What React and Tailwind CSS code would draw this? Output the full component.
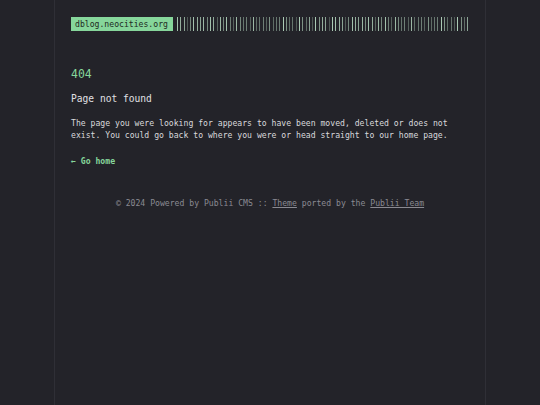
const bars = Array.from({ length: 89 }, (_, i) => {
  const pattern = [0.85, 0.45, 0.7, 0.35, 0.9, 0.55, 0.4, 0.75, 0.5, 0.3, 0.8, 0.6];
  return pattern[(i * 7 + (i >> 2)) % pattern.length];
});

export default function App() {
  return (
    <div
      className="min-h-[405px] w-full bg-[#232329] text-[#e4e4e7]"
      style={{ fontFamily: '"DejaVu Sans Mono", "Liberation Mono", monospace' }}
    >
      <div className="mx-auto min-h-[405px] w-[432px] border-x border-[#2f2f36] px-[16px]">
        {/* header */}
        <header className="flex items-stretch pt-[17px]">
          <a className="flex h-[14px] w-[102px] items-center bg-[#86d69b] px-[4px] text-[8.15px] text-[#1f2a22]">
            dblog.neocities.org
          </a>
          <div className="ml-[4px] flex flex-1 justify-between">
            {bars.map((o, i) => (
              <span
                key={i}
                className="h-[14px] w-px bg-[#b9dcc3]"
                style={{ opacity: o }}
              />
            ))}
          </div>
        </header>

        {/* contenido */}
        <main className="pt-[36px]">
          <h1 className="text-[11.5px] font-normal leading-[14px] text-[#86d69b]">404</h1>
          <h2 className="mt-[11px] text-[9.6px] font-normal leading-[14px] text-[#e0e0e4]">Page not found</h2>
          <p className="mt-[11px] text-[8.15px] leading-[12px] text-[#d8d8dc]">
            The page you were looking for appears to have been moved, deleted or does not exist. You could go back to where you were or head straight to our home page.
          </p>
          <a className="mt-[14px] block text-[8.15px] font-bold leading-[12px] text-[#86d69b]">
            ← Go home
          </a>
        </main>

        {/* pie */}
        <footer className="pt-[30px] text-center text-[8.15px] leading-[12px] text-[#8a8a92]">
          © 2024 Powered by Publii CMS :: <span className="underline">Theme</span> ported by the{" "}
          <span className="underline">Publii Team</span>
        </footer>
      </div>
    </div>
  );
}
